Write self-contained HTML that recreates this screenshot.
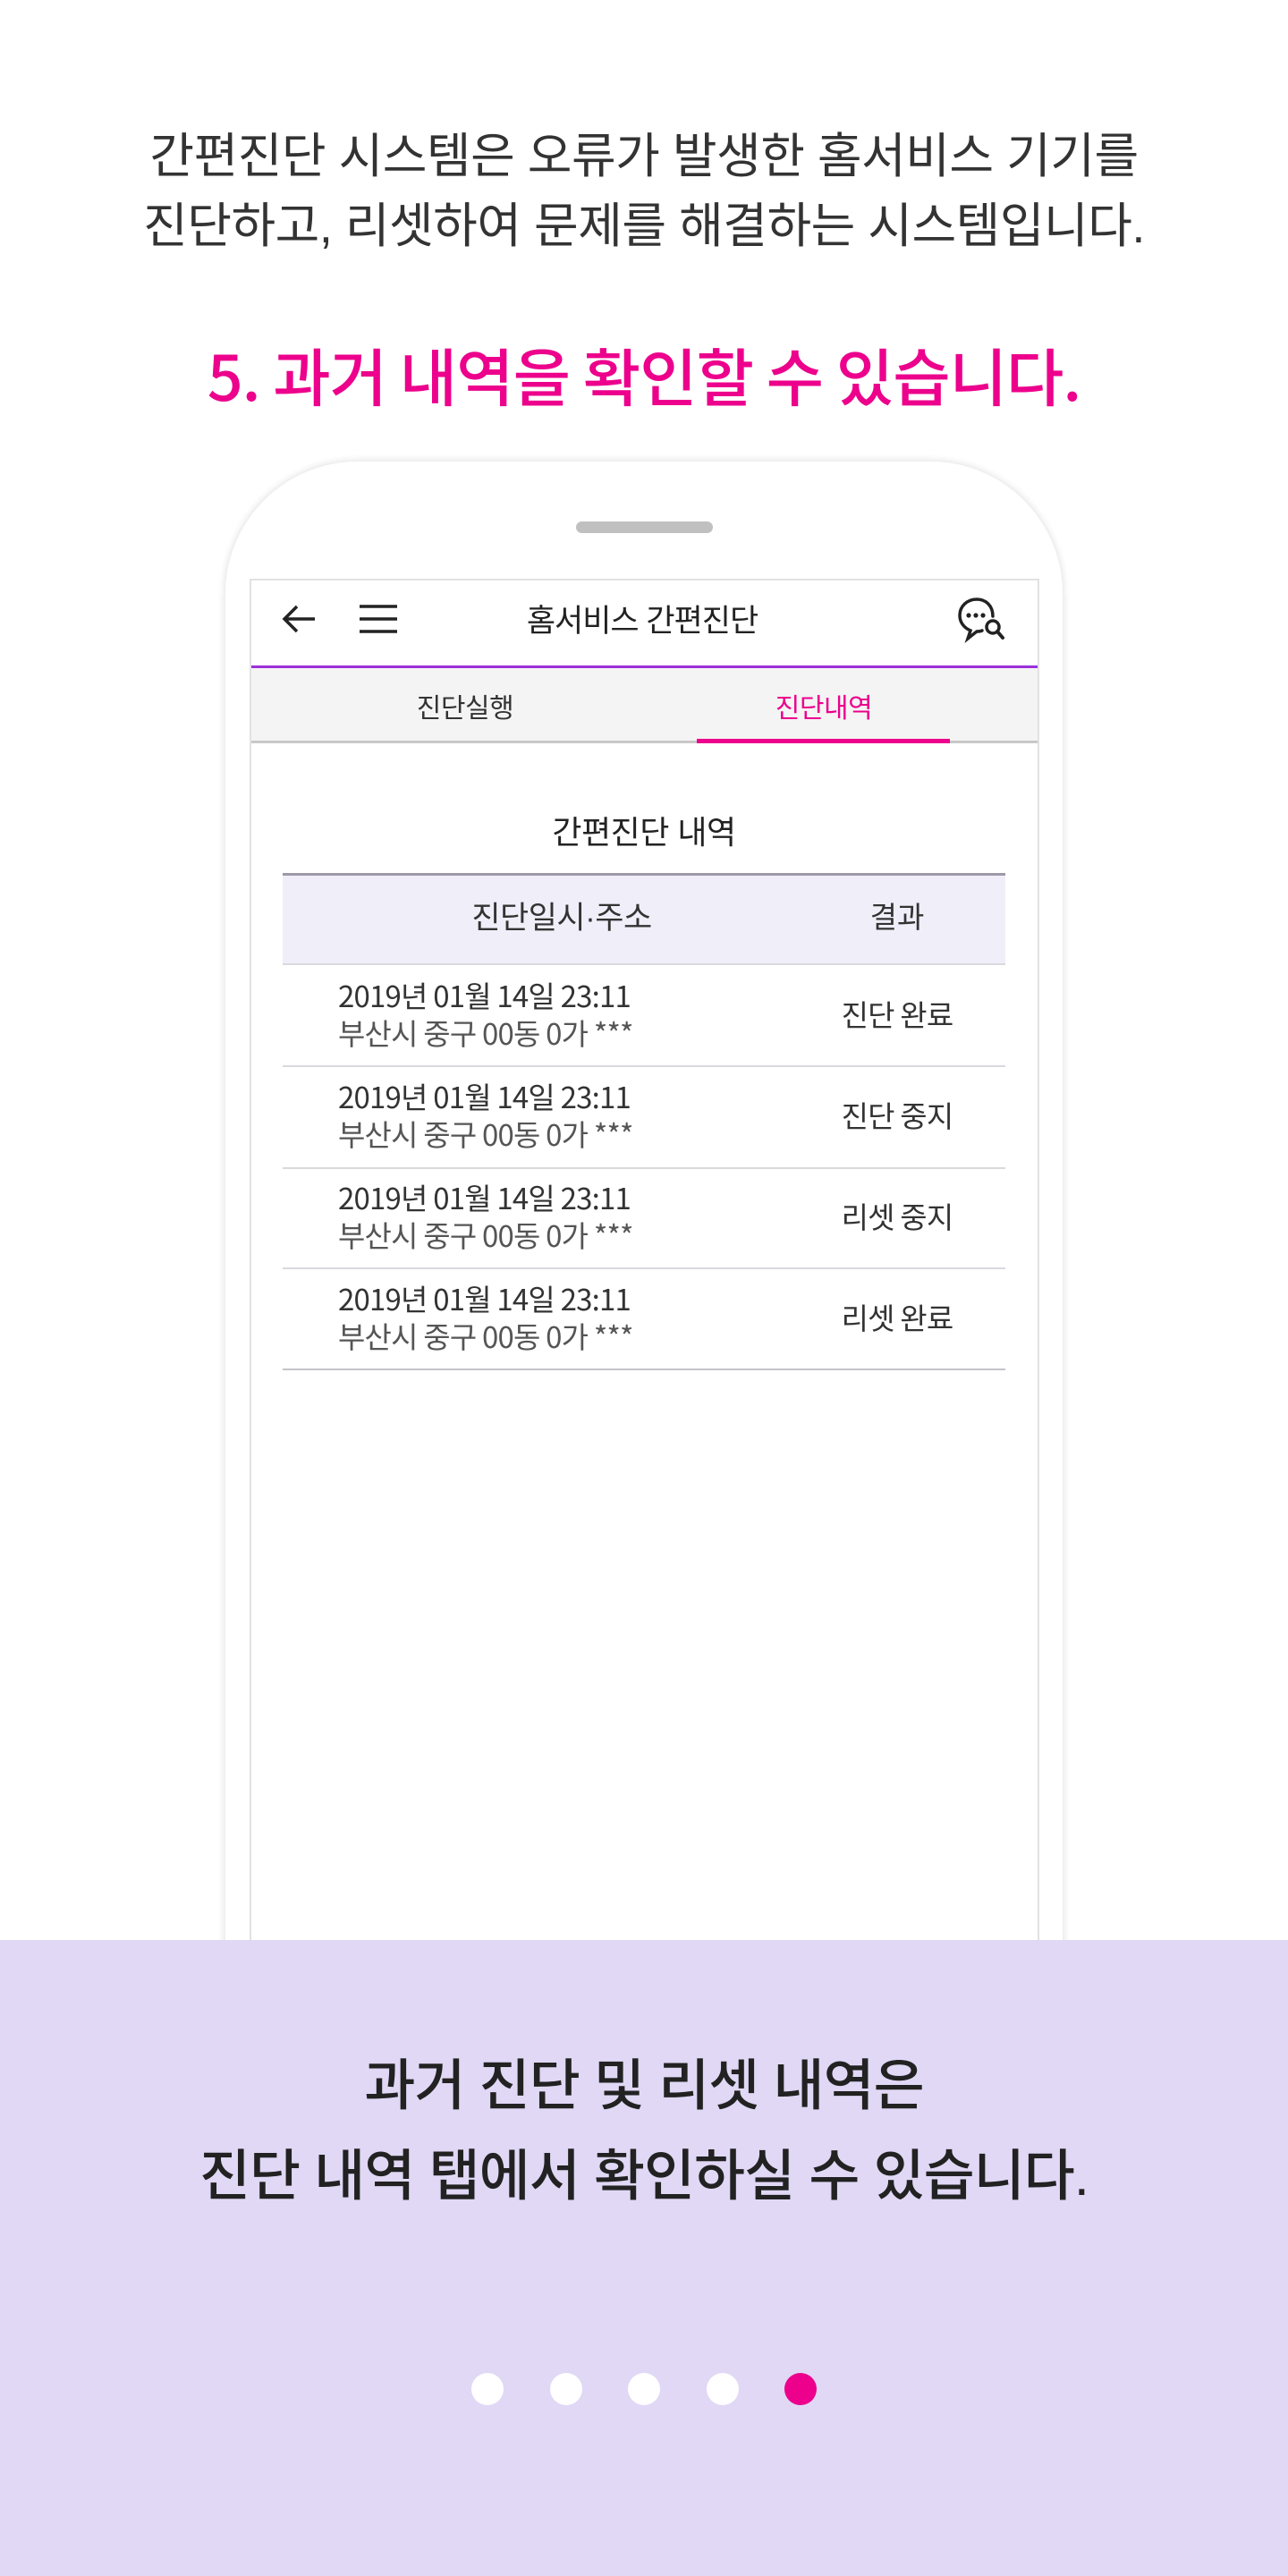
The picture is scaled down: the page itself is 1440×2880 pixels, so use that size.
<!DOCTYPE html>
<html><head><meta charset="utf-8">
<style>
*{margin:0;padding:0;box-sizing:border-box}
body{width:1440px;height:2880px;position:relative;background:#fff;font-family:"Liberation Sans","Noto Sans CJK KR",sans-serif;color:#333;overflow:hidden}
.a{position:absolute;white-space:nowrap}
.c{left:0;width:1440px;text-align:center}
.intro{font-size:54px;letter-spacing:-0.5px;color:#333;line-height:1}
.pink{color:#ec008c}
.phone{position:absolute;left:250px;top:514px;width:940px;height:1800px;border-radius:150px 150px 0 0;background:#fff;box-shadow:0 0 6px 2px rgba(0,0,0,0.06);border:2px solid #f0f0f0}
.speaker{position:absolute;left:644px;top:583px;width:153px;height:13px;border-radius:7px;background:#c0c0c0}
.screen{position:absolute;left:279px;top:647px;width:883px;height:1600px;border:2px solid #e2e2e2;background:#fff}
.bottom{position:absolute;left:0;top:2169px;width:1440px;height:711px;background:#e0d8f5}
.dot{position:absolute;width:36px;height:36px;border-radius:50%;background:#fff;top:2653px}
.row{position:absolute;left:316px;width:808px;height:2px;background:#d9d9de}
.d{font-family:"Noto Sans CJK KR",sans-serif;font-size:33px;letter-spacing:-0.8px;color:#333;line-height:1.2}
.ad{font-family:"Noto Sans CJK KR",sans-serif;font-size:33px;letter-spacing:-0.8px;color:#555;line-height:1.2}
</style></head><body>

<div class="a c intro" style="top:148px">간편진단 시스템은 오류가 발생한 홈서비스 기기를</div>
<div class="a c intro" style="top:226px">진단하고, 리셋하여 문제를 해결하는 시스템입니다.</div>
<div class="a c pink" style="top:380px;font-family:'Noto Sans CJK KR',sans-serif;font-size:70px;font-weight:500;letter-spacing:-1px;line-height:1.1">5. 과거 내역을 확인할 수 있습니다.</div>

<div class="phone"></div>
<div class="speaker"></div>
<div class="screen"></div>

<svg class="a" style="left:312px;top:672px" width="44" height="40" viewBox="0 0 44 40"><path d="M40 20H6M20 6L6 20l14 14" fill="none" stroke="#222" stroke-width="3.5"/></svg>
<svg class="a" style="left:402px;top:675px" width="42" height="34" viewBox="0 0 42 34"><path d="M0 3h42M0 17h42M0 31h42" stroke="#222" stroke-width="3.5"/></svg>
<div class="a" style="left:518px;width:400px;text-align:center;top:676px;font-size:35px;letter-spacing:-1px;color:#222;line-height:1.1">홈서비스 간편진단</div>
<svg class="a" style="left:1070px;top:667px" width="56" height="52" viewBox="0 0 56 52"><path d="M40 22C40 10 32 3 22 3 11 3 3 11 3 21c0 8 5 14 12 17l-3 9 10-8c2 0 4 0 6-1" fill="none" stroke="#222" stroke-width="3.5" stroke-linecap="round"/><circle cx="13" cy="21" r="2.6" fill="#222"/><circle cx="21" cy="21" r="2.6" fill="#222"/><circle cx="29" cy="21" r="2.6" fill="#222"/><circle cx="40" cy="34" r="7" fill="#fff" stroke="#222" stroke-width="3.5"/><path d="M45 39l6 7" stroke="#222" stroke-width="4" stroke-linecap="round"/></svg>
<div class="a" style="left:281px;top:744px;width:879px;height:3px;background:#9b30d9"></div>
<div class="a" style="left:281px;top:747px;width:879px;height:82px;background:#f4f4f4"></div>
<div class="a" style="left:281px;top:828px;width:879px;height:3px;background:#c8c8c8"></div>
<div class="a" style="left:779px;top:826px;width:283px;height:5px;background:#ec008c"></div>
<div class="a" style="left:420px;width:200px;text-align:center;top:775px;font-size:30px;color:#333;line-height:1.2;letter-spacing:-0.5px">진단실행</div>
<div class="a pink" style="left:821px;width:200px;text-align:center;top:775px;font-size:30px;line-height:1.2;letter-spacing:-0.5px">진단내역</div>

<div class="a" style="left:520px;width:400px;text-align:center;top:909px;font-size:36px;color:#222;line-height:1.2;letter-spacing:-0.5px">간편진단 내역</div>

<div class="a" style="left:316px;top:976px;width:808px;height:3px;background:#9e9aa8"></div>
<div class="a" style="left:316px;top:979px;width:808px;height:98px;background:#f0eef8"></div>
<div class="a" style="left:478px;width:300px;text-align:center;top:1006px;font-size:35px;color:#333;line-height:1.2;letter-spacing:-0.5px">진단일시·주소</div>
<div class="a" style="left:903px;width:200px;text-align:center;top:1006px;font-size:33px;color:#333;line-height:1.2">결과</div>
<div class="row" style="top:1077px"></div>

<div class="a d" style="left:378px;top:1093px">2019년 01월 14일 23:11</div>
<div class="a ad" style="left:378px;top:1135px">부산시 중구 00동 0가 ***</div>
<div class="a d" style="left:903px;width:200px;text-align:center;top:1114px">진단 완료</div>
<div class="row" style="top:1191px"></div>

<div class="a d" style="left:378px;top:1206px">2019년 01월 14일 23:11</div>
<div class="a ad" style="left:378px;top:1248px">부산시 중구 00동 0가 ***</div>
<div class="a d" style="left:903px;width:200px;text-align:center;top:1227px">진단 중지</div>
<div class="row" style="top:1305px"></div>

<div class="a d" style="left:378px;top:1319px">2019년 01월 14일 23:11</div>
<div class="a ad" style="left:378px;top:1361px">부산시 중구 00동 0가 ***</div>
<div class="a d" style="left:903px;width:200px;text-align:center;top:1340px">리셋 중지</div>
<div class="row" style="top:1417px"></div>

<div class="a d" style="left:378px;top:1432px">2019년 01월 14일 23:11</div>
<div class="a ad" style="left:378px;top:1474px">부산시 중구 00동 0가 ***</div>
<div class="a d" style="left:903px;width:200px;text-align:center;top:1453px">리셋 완료</div>
<div class="row" style="top:1530px;background:#c4c4c8"></div>

<div class="bottom"></div>
<div class="a c" style="top:2296px;font-size:62px;color:#222;letter-spacing:-1px;line-height:1.2;font-weight:500">과거 진단 및 리셋 내역은</div>
<div class="a c" style="top:2397px;font-size:62px;color:#222;letter-spacing:-1px;line-height:1.2;font-weight:500">진단 내역 탭에서 확인하실 수 있습니다.</div>

<div class="dot" style="left:527px"></div>
<div class="dot" style="left:615px"></div>
<div class="dot" style="left:702px"></div>
<div class="dot" style="left:790px"></div>
<div class="dot" style="left:877px;background:#ec008c"></div>
</body></html>
